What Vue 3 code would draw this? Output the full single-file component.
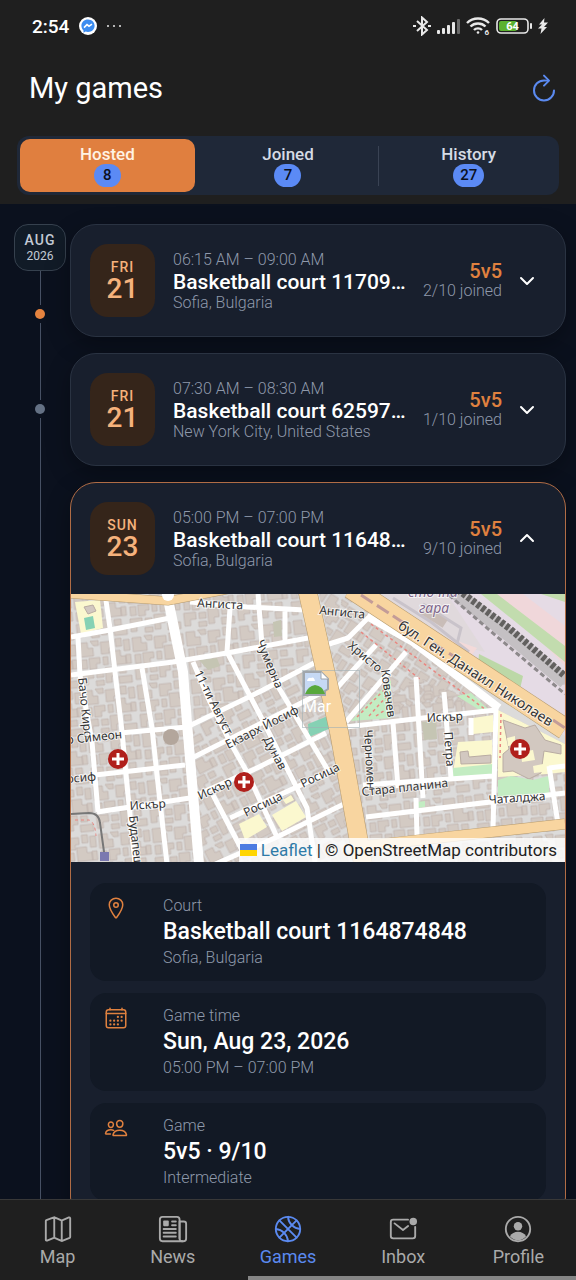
<template>
    <div class="app-shell">
        <header class="top">
            <div class="status-bar">
                <span class="clock">2:54</span>
                <svg class="messenger" viewBox="0 0 18 18">
                    <circle cx="9" cy="9" r="9" fill="#fff" />
                    <path d="M9 2.4c-3.8 0-6.6 2.7-6.6 6.3 0 1.9.8 3.5 2.1 4.7v2.3l2.1-1.1c.8.2 1.6.3 2.4.3 3.8 0 6.6-2.7 6.6-6.2S12.8 2.4 9 2.4z" fill="#3b8cf0" />
                    <path d="M5 10.600l3-3 2 1.600 3-2" fill="none" stroke="#fff" stroke-width="1.500" />
                </svg>
                <span class="dots"><i></i><i></i><i></i></span>
                <div class="status-icons">
                    <svg width="18" height="20" viewBox="0 0 18 20" fill="none" stroke="#e8e8e8" stroke-width="2">
                        <path d="M4 5l10 9-5 4.500V1.500L14 6 4 15" />
                        <path d="M0 10h3M15 10h3" />
                    </svg>
                    <svg width="23" height="16" viewBox="0 0 23 16" fill="#e8e8e8">
                        <rect x="0" y="12" width="3" height="4" rx="1" />
                        <rect x="5" y="10" width="3" height="6" rx="1" />
                        <rect x="10" y="7" width="3" height="9" rx="1" />
                        <rect x="15" y="4" width="3" height="12" rx="1" />
                        <rect x="20" y="1" width="3" height="15" rx="1" fill="#6a6a6a" />
                    </svg>
                    <svg width="24" height="18" viewBox="0 0 24 18" fill="none" stroke="#e8e8e8" stroke-width="2.400">
                        <path d="M1 6c6-6 16-6 22 0M4.500 9.500c4-4 11-4 15 0M8 13c2-2.200 6-2.200 8 0" />
                        <circle cx="12" cy="15.500" r="1.300" fill="#e8e8e8" stroke="none" />
                        <text x="18.500" y="17.500" class="wifi-six">6</text>
                    </svg>
                    <svg width="36" height="16" viewBox="0 0 36 16">
                        <rect x="1" y="1" width="31" height="14" rx="4" fill="none" stroke="#e8e8e8" stroke-width="1.600" />
                        <rect x="3" y="3" width="18" height="10" rx="2" fill="#5bb12f" />
                        <rect x="34" y="5" width="2" height="6" rx="1" fill="#e8e8e8" />
                        <text x="16.500" y="12" class="battery-level">64</text>
                    </svg>
                    <svg width="10" height="16" viewBox="0 0 10 16" fill="#e8e8e8">
                        <path d="M6.500 0L1 6.500h3L0 10.500h3.500L2.500 16 9 9H6l4-4.500H6z" />
                    </svg>
                </div>
            </div>

            <div class="title-bar">
                <h1>My games</h1>
                <button type="button" class="icon-btn" aria-label="Refresh" @click="refresh">
                    <svg width="32" height="32" viewBox="0 0 512 512" fill="none" stroke="#5b8af0" stroke-width="32" stroke-linecap="round" stroke-linejoin="round">
                        <path d="M320 146s24.360-12-64-12a160 160 0 10160 160" />
                        <path d="M256 58l80 80-80 80" />
                    </svg>
                </button>
            </div>

            <div class="segment">
                <button v-for="tab in tabs" :key="tab.id" type="button" class="segment-btn"
                    :class="{ active: tab.id === activeTab }" @click="activeTab = tab.id">
                    <span>{{ tab.label }}</span>
                    <span class="badge">{{ tab.count }}</span>
                </button>
            </div>
        </header>

        <main class="content">
            <aside class="timeline">
                <div class="month">
                    <strong>AUG</strong>
                    <span>2026</span>
                </div>
                <div class="line line-short"></div>
                <div class="dot dot-active"></div>
                <div class="line line-mid"></div>
                <div class="dot"></div>
                <div class="line line-rest"></div>
            </aside>

            <section class="games">
                <article v-for="game in games" :key="game.id" class="game-card" :class="{ open: game.id === openId }">
                    <button type="button" class="game-head" @click="toggle(game.id)">
                        <span class="date-box">
                            <span class="weekday">{{ game.weekday }}</span>
                            <span class="day">{{ game.day }}</span>
                        </span>
                        <span class="game-info">
                            <span class="muted">{{ game.time }}</span>
                            <span class="court-name">{{ game.court }}</span>
                            <span class="muted">{{ game.place }}</span>
                        </span>
                        <span class="game-side">
                            <span class="format">{{ game.format }}</span>
                            <span class="muted">{{ game.joined }} joined</span>
                        </span>
                        <svg class="chevron" viewBox="0 0 16 16" fill="none" stroke="#fff" stroke-width="2" stroke-linecap="round" stroke-linejoin="round">
                            <path :d="game.id === openId ? 'M2 10l6-6 6 6' : 'M2 5l6 6 6-6'" />
                        </svg>
                    </button>

                    <template v-if="game.id === openId">
                        <div class="map">
                            <svg class="map-tiles" viewBox="0 0 494 268" preserveAspectRatio="xMidYMid slice">
                                <defs>
                                    <pattern id="houses" width="54" height="48" patternUnits="userSpaceOnUse">
                                        <path :d="houses" fill="#d3cac3" stroke="#beb2aa" stroke-width="0.700" />
                                    </pattern>
                                    <pattern id="houses-west" href="#houses" patternTransform="rotate(-6)" />
                                    <pattern id="houses-mid" href="#houses" patternTransform="rotate(-27)" />
                                    <pattern id="houses-north" href="#houses" patternTransform="rotate(33)" />
                                </defs>
                                <rect width="494" height="268" fill="#dcdbda" />
                                <path d="M0 0H239L242 69 116 134 127 268H0z" fill="url(#houses-west)" />
                                <path d="M116 134L246 66 292 268H127z" fill="url(#houses-mid)" />
                                <path d="M248 0H285L427 114 345 112 275 130z" fill="url(#houses-north)" />
                                <path d="M270 130L345 84 427 116 494 150V268H290z" fill="url(#houses-west)" />

                                <path d="M4 8L29 6 32 34 10 40z" fill="#fbf8cf" />
                                <path d="M13 24l9-2 2 12-9 2zM237 130l20-8 3 12-22 9z" fill="#86d1b4" />
                                <path d="M13 13l9-2 3 6-8 3z" fill="#d2c8c0" stroke="#b9aca3" />
                                <path d="M128 66l18-2 3 8-12 4zM202 28l8-2 1 16-8 1zM351 128l14-1 1 18-13 1z" fill="#c5c5b3" />
                                <path d="M168 230l20-10 8 13-22 13zM201 221l24-14 10 16-24 14zM212 206l8-5 3 5-8 4z" fill="#fbf8cf" />
                                <path d="M387 148l34-2 1 30-40 2zM402 124l20-3v17l-20 2zM427 116l67 34v28l-18 2-49 3z" fill="#fbf8cf" />
                                <path d="M432 126l22 8 10-3 10 15 16 5v9l-17-3-3 22-12 6-16-8-10 1v-18l6-5z" fill="#d2c8c0" stroke="#b9aca3" />
                                <path d="M450 158l12-2 2 10-13 2zM436 144l8-2v9l-7 1zM462 172l10-2v8l-9 1z" fill="#fbf8cf" />
                                <path d="M389 158l8-1 1 6 22-2v8l-30 1z" fill="#d2c8c0" stroke="#b9aca3" />
                                <path d="M280 127L320 86v38zM427 186l13-4 22 4 16-4v17l-51 4zM382 174l40-4v10l-40 4zM386 102l14-3 18 17-8 1zM346 208l8-1v6l-8 1z" fill="#c3ecc2" />
                                <path d="M286 123l30-30M298 122l18-20M305 122l12-8M300 30l115 86M290 38l60 48M425 122l-1 45M430 120l-1 44" fill="none" stroke="#e98680" stroke-width="1.500" stroke-dasharray="3 3" />

                                <path d="M296 0H494V142L330 30z" fill="#e5dbe5" />
                                <path d="M300 0L372 48 414 58 376 0z" fill="#e0d9dc" />
                                <path d="M378 44l28 10-10 14-24-10z" fill="#f3dad9" />
                                <path d="M408 60l44 22-6 26-40-24z" fill="#bcd8a7" />
                                <path d="M424 0h28l42 32v40z" fill="#f0d7da" />
                                <path d="M410 0h16l68 52v16zM470 0h24v8z" fill="#c2dcae" />
                                <path d="M322 4l38 24 38 30M352 10l38 24-4 16M420 30l74 60" fill="none" stroke="#c9c3ca" stroke-width="3" />
                                <path d="M376 -8L432 36 494 88" fill="none" stroke="#c4c0c3" stroke-width="14" />
                                <path d="M382 -8L438 34 494 82" fill="none" stroke="#62605f" stroke-width="7" stroke-dasharray="4 2" />
                                <path d="M372 -4L430 46 494 100" fill="none" stroke="#8d898b" stroke-width="3" stroke-dasharray="5 3" />
                                <path d="M336 28l28 18M352 16l22 14M300 4l22 14" stroke="#c9bdb8" stroke-width="9" />

                                <g fill="none" stroke="#fff" stroke-width="5" stroke-linejoin="round">
                                    <path d="M34 0L39 34 44 78 51 138 56 191 64 270M7 43L9 81 21 148 27 218M71 74L81 134 86 181 96 270" />
                                    <path d="M0 43L39 36 99 24M0 81L102 68 156 59 237 44M49 139L116 133 192 96 243 69M24 181L114 171M121 164L252 98" />
                                    <path d="M26 218L119 204 186 174 255 139M159 224L256 179M140 272L206 243 275 209" />
                                    <path d="M119 8L176 13 234 16M159 14L156 58 189 121 236 214 244 268M187 0L191 51M214 16V48M202 84L258 178" />
                                    <path d="M122 68L139 108 159 148 176 178 206 243M142 201L172 258" />
                                    <path d="M255 51L277 44 298 23M264 96L305 51M275 128L335 58M345 83L352 204M373 98L380 184M322 129L327 194M400 124V141" />
                                    <path d="M275 133L352 124 425 116M425 114L422 236M292 191L422 182M295 223L494 199M345 204L346 243M478 172L487 230M478 174L494 172" />
                                </g>
                                <path d="M97 5L112 78 117 141 128 270" fill="none" stroke="#fff" stroke-width="10" />
                                <path d="M296 22L342 48 428 114" fill="none" stroke="#fff" stroke-width="8" />

                                <g fill="none" stroke="#b59a6e">
                                    <path d="M0 0L97 7 160 -5" stroke-width="9" />
                                    <path d="M295 252L494 230" stroke-width="11" />
                                    <path d="M280 -6L494 135" stroke-width="22" />
                                    <path d="M236 -5L268 138 292 270" stroke-width="19" />
                                </g>
                                <g fill="none" stroke="#f8d5a0">
                                    <path d="M0 0L97 7 160 -5" stroke-width="8" />
                                    <path d="M292 252L494 230" stroke-width="10" />
                                    <path d="M280 -6L494 135" stroke-width="21" />
                                    <path d="M236 -5L268 138 292 270" stroke-width="18" />
                                </g>
                                <path d="M290 1l46 30M362 49l22 14M482 126l12 8" stroke="#c39c98" stroke-width="3" stroke-dasharray="14 5" />
                                <circle cx="97" cy="1" r="6" fill="#fff" />
                                <circle cx="100" cy="143" r="8" fill="#b3a69c" />
                                <path d="M0 220l18-1q10 0 11 10l5 36" fill="none" stroke="#777" stroke-width="2" />
                                <path d="M4 226h14q6 2 7 16" fill="none" stroke="#e98680" stroke-dasharray="3 3" />
                                <rect x="29" y="258" width="9" height="9" fill="#7b79b0" />

                                <text v-for="label in streets" :key="label.id" class="street" :class="label.kind"
                                    :transform="`translate(${label.x} ${label.y}) rotate(${label.angle})`">{{ label.name }}</text>

                                <g v-for="spot in hospitals" :key="spot.x" :transform="`translate(${spot.x} ${spot.y})`">
                                    <circle r="10" fill="#b01f1b" />
                                    <path d="M-6 0H6M0-6V6" stroke="#fff" stroke-width="3" />
                                </g>
                            </svg>
                            <div class="marker">
                                <svg width="26" height="28" viewBox="0 0 26 28">
                                    <path d="M1 1h17l7 7v10l-3 2v4H1z" fill="#c6d9f4" stroke="#a0a6ac" stroke-width="2" />
                                    <path d="M18 1v7h7" fill="#fff" stroke="#a0a6ac" />
                                    <path d="M4 10q1-4 4-3 3-2 4 3z" fill="#fff" />
                                    <path d="M2 23q3-8 10-9 8 1 10 9z" fill="#58a83c" />
                                </svg>
                                <span>Mar</span>
                            </div>
                            <div class="attribution">
                                <svg class="flag" width="17" height="12" viewBox="0 0 17 12">
                                    <path d="M0 0h17v6H0z" fill="#4c7be1" />
                                    <path d="M0 6h17v6H0z" fill="#ffd500" />
                                </svg>
                                <a href="#leaflet">Leaflet</a> | © OpenStreetMap contributors
                            </div>
                        </div>

                        <div class="details">
                            <div v-for="row in details" :key="row.label" class="detail">
                                <svg class="detail-icon" viewBox="0 0 512 512" fill="none" stroke="#e0813f" stroke-width="32" stroke-linecap="round" stroke-linejoin="round">
                                    <template v-if="row.icon === 'pin'">
                                        <path d="M256 48c-79.500 0-144 61.400-144 137 0 87 96 224.870 131.250 272.490a15.770 15.770 0 0025.500 0C304 409.890 400 272.070 400 185c0-75.600-64.500-137-144-137z" />
                                        <circle cx="256" cy="192" r="48" />
                                    </template>
                                    <template v-else-if="row.icon === 'calendar'">
                                        <rect x="48" y="80" width="416" height="384" rx="48" />
                                        <path d="M128 48v32M384 48v32M464 160H48" />
                                        <g fill="#e0813f" stroke="none">
                                            <circle v-for="(dot, i) in calendarDots" :key="i" :cx="dot[0]" :cy="dot[1]" r="24" />
                                        </g>
                                    </template>
                                    <template v-else>
                                        <path d="M402 168c-3 40-33 72-66 72s-63-32-66-72c-3-42 26-72 66-72s69 31 66 72z" />
                                        <path d="M336 304c-65 0-128 32-144 95-2 8 3 17 12 17h264c9 0 14-9 12-17-16-64-78-95-144-95z" />
                                        <path d="M200 186c-3 32-27 58-53 58s-50-26-53-58c-2-34 22-58 53-58s55 25 53 58zM206 306c-18-8-38-11-59-11-52 0-102 25-115 76-2 7 3 13 10 13h95" />
                                    </template>
                                </svg>
                                <div class="detail-text">
                                    <span class="muted">{{ row.label }}</span>
                                    <strong>{{ row.value }}</strong>
                                    <span class="muted">{{ row.note }}</span>
                                </div>
                            </div>
                        </div>
                    </template>
                </article>
            </section>
        </main>

        <footer class="bottom">
            <nav class="tab-bar">
                <a v-for="item in navItems" :key="item.id" :href="'#' + item.id" class="tab" :class="{ current: item.id === 'games' }">
                    <svg width="30" height="30" viewBox="0 0 512 512" fill="none" stroke="currentColor" stroke-width="32" stroke-linecap="round" stroke-linejoin="round">
                        <path v-if="item.id === 'map'" d="M313 108l-114-52a16 16 0 00-14 0L57 104a16 16 0 00-9 15v320a16 16 0 0022 15l115-46a16 16 0 0113 0l117 51a16 16 0 0013 0l127-52a16 16 0 009-14V72a16 16 0 00-22-14l-116 50a16 16 0 01-13 0zM192 60v344M320 112v344" />
                        <template v-else-if="item.id === 'news'">
                            <path d="M368 415V92a44 44 0 00-44-44H76a44 44 0 00-44 44v328a44 44 0 0044 44h340" />
                            <path d="M416 464a48 48 0 01-48-48V128h72a40 40 0 0140 40v248a48 48 0 01-48 48z" />
                            <path d="M240 128h64M240 192h64M96 256h208M96 320h208M96 384h208" />
                            <rect x="88" y="112" width="96" height="96" rx="14" fill="currentColor" stroke="none" />
                        </template>
                        <template v-else-if="item.id === 'games'">
                            <circle cx="256" cy="256" r="208" />
                            <path d="M109 109l294 294M403 109L109 403" />
                            <path d="M48 256c110 8 200 98 208 208M256 48c8 110 98 200 208 208" />
                        </template>
                        <template v-else-if="item.id === 'inbox'">
                            <path d="M342 96H88a40 40 0 00-40 40v240a40 40 0 0040 40h336a40 40 0 0040-40V219M112 160l144 112 87-66" />
                            <circle cx="431" cy="128" r="64" fill="currentColor" stroke="none" />
                        </template>
                        <template v-else>
                            <circle cx="256" cy="256" r="208" />
                            <circle cx="256" cy="208" r="72" fill="currentColor" stroke="none" />
                            <path d="M256 304c58 0 108 28 138 76-36 44-84 68-138 68s-102-24-138-68c30-48 80-76 138-76z" fill="currentColor" stroke="none" />
                        </template>
                    </svg>
                    <span>{{ item.label }}</span>
                </a>
            </nav>
            <div class="home-indicator"></div>
        </footer>
    </div>
</template>

<script setup>
import { ref } from 'vue'

const activeTab = ref('hosted')
const openId = ref(3)

const tabs = [
    { id: 'hosted', label: 'Hosted', count: 8 },
    { id: 'joined', label: 'Joined', count: 7 },
    { id: 'history', label: 'History', count: 27 },
]

const games = ref([
    { id: 1, weekday: 'FRI', day: 21, time: '06:15 AM – 09:00 AM', court: 'Basketball court 11709…', place: 'Sofia, Bulgaria', format: '5v5', joined: '2/10' },
    { id: 2, weekday: 'FRI', day: 21, time: '07:30 AM – 08:30 AM', court: 'Basketball court 62597…', place: 'New York City, United States', format: '5v5', joined: '1/10' },
    { id: 3, weekday: 'SUN', day: 23, time: '05:00 PM – 07:00 PM', court: 'Basketball court 11648…', place: 'Sofia, Bulgaria', format: '5v5', joined: '9/10' },
])

const details = [
    { icon: 'pin', label: 'Court', value: 'Basketball court 1164874848', note: 'Sofia, Bulgaria' },
    { icon: 'calendar', label: 'Game time', value: 'Sun, Aug 23, 2026', note: '05:00 PM – 07:00 PM' },
    { icon: 'people', label: 'Game', value: '5v5 · 9/10', note: 'Intermediate' },
]

const navItems = [
    { id: 'map', label: 'Map' },
    { id: 'news', label: 'News' },
    { id: 'games', label: 'Games' },
    { id: 'inbox', label: 'Inbox' },
    { id: 'profile', label: 'Profile' },
]

const calendarDots = [
    [296, 232], [376, 232],
    [136, 312], [216, 312], [296, 312], [376, 312],
    [136, 392], [216, 392], [296, 392],
]

// One tile of building footprints, repeated over the blocks
const houses = 'M2 2h9v6h5v8H2zM14 1h8v5h-5zM24 3h12v7h-4v5h-8zM39 1h6v8h-6zM47 3h6v11h-6zM3 19h6v9H3zM11 18h11v6h-4v5h-7zM25 18h5v8h-5zM33 13h10v6h5v8H33zM2 31h12v7H8v6H2zM17 32h7v6h-7zM26 29h11v9h-5v6h-6zM40 30h7v6h-7zM48 18h5v9h-5zM16 41h8v5h-8zM39 39h13v7H39z'

const streets = [
    { id: 1, name: 'Ангиста', x: 126, y: 13, angle: 3 },
    { id: 2, name: 'Ангиста', x: 248, y: 20, angle: 6 },
    { id: 3, name: 'Бачо Киро', x: 7, y: 84, angle: 84 },
    { id: 4, name: 'о Симеон', x: -4, y: 150, angle: -6 },
    { id: 5, name: 'осиф', x: -4, y: 189, angle: -5 },
    { id: 6, name: 'Искър', x: 59, y: 216, angle: -4 },
    { id: 7, name: 'Будапеща', x: 58, y: 222, angle: 84 },
    { id: 8, name: '11-ти Август', x: 123, y: 79, angle: 63 },
    { id: 9, name: 'Чумерна', x: 185, y: 48, angle: 67 },
    { id: 10, name: 'Екзарх Йосиф', x: 157, y: 155, angle: -27 },
    { id: 11, name: 'Дунав', x: 192, y: 145, angle: 62 },
    { id: 12, name: 'Искър', x: 129, y: 206, angle: -25 },
    { id: 13, name: 'Росица', x: 175, y: 223, angle: -26 },
    { id: 14, name: 'Росица', x: 232, y: 194, angle: -26 },
    { id: 15, name: 'Христо', x: 276, y: 53, angle: 40 },
    { id: 16, name: 'Ковачев', x: 310, y: 76, angle: 82 },
    { id: 17, name: 'Искър', x: 356, y: 128, angle: -3 },
    { id: 18, name: 'Черномен', x: 293, y: 136, angle: 87 },
    { id: 19, name: 'Петра', x: 373, y: 138, angle: 86 },
    { id: 20, name: 'Стара планина', x: 291, y: 202, angle: -6 },
    { id: 21, name: 'Чаталджа', x: 418, y: 210, angle: -4 },
    { id: 22, name: 'бул. Ген. Данаил Николаев', x: 326, y: 34, angle: 33, kind: 'boulevard' },
    { id: 23, name: 'сточна', x: 337, y: 3, angle: 0, kind: 'station' },
    { id: 24, name: 'гара', x: 348, y: 19, angle: 0, kind: 'station' },
]

const hospitals = [
    { x: 47, y: 165 },
    { x: 173, y: 188 },
    { x: 449, y: 155 },
]

const toggle = (id) => {
    openId.value = openId.value === id ? null : id
}

const refresh = () => {
    // TODO: reload games from the API
    games.value = [...games.value]
}
</script>

<style>
body {
    background-color: #0b111e;
}
</style>

<style scoped>
.app-shell {
    display: flex;
    flex-direction: column;
    height: 100vh;
    overflow: hidden;
    background-color: #0b111e;
    color: #fff;
    font-family: Roboto, "Liberation Sans", sans-serif;
    font-size: 16px;
}

button {
    font: inherit;
    color: inherit;
    background: none;
    border: none;
    padding: 0;
    cursor: pointer;
}

.top {
    flex: none;
    background-color: #1f1f1f;
    padding-bottom: 9px;
}

.status-bar {
    display: flex;
    align-items: center;
    gap: 10px;
    height: 52px;
    padding: 0 28px 0 32px;
}

.clock {
    font-size: 19px;
    font-weight: 500;
}

.messenger {
    width: 18px;
    height: 18px;
}

.dots {
    display: flex;
    gap: 4px;
}

.dots i {
    width: 2px;
    height: 2px;
    border-radius: 1px;
    background-color: #e8e8e8;
}

.status-icons {
    display: flex;
    align-items: center;
    gap: 6px;
    margin-left: auto;
}

.wifi-six {
    font-size: 8px;
    font-weight: 700;
    fill: #e8e8e8;
    stroke: #1f1f1f;
    stroke-width: 1px;
    paint-order: stroke;
}

.battery-level {
    font-size: 11px;
    font-weight: 700;
    fill: #fff;
    text-anchor: middle;
}

.title-bar {
    display: flex;
    align-items: center;
    justify-content: space-between;
    height: 72px;
    padding: 0 16px 0 29px;
}

h1 {
    margin: 0;
    font-size: 29px;
    font-weight: 400;
}

.icon-btn {
    display: flex;
}

.segment {
    display: grid;
    grid-template-columns: repeat(3, 1fr);
    margin: 12px 17px 0;
    border-radius: 12px;
    background-color: #1f2838;
}

.segment-btn {
    position: relative;
    display: flex;
    flex-direction: column;
    align-items: center;
    height: 53px;
    margin: 3px;
    padding-top: 5px;
    border-radius: 10px;
    color: #d5dbe5;
    font-size: 17px;
    font-weight: 500;
    line-height: 20px;
}

.segment-btn.active {
    background-color: #e07f3f;
    color: #fff3e4;
}

.segment-btn:nth-child(2)::after {
    content: "";
    position: absolute;
    top: 7px;
    right: -4px;
    width: 1px;
    height: 40px;
    background-color: #3a4354;
}

.badge {
    min-width: 27px;
    padding: 0 7px;
    box-sizing: border-box;
    border-radius: 12px;
    background-color: #5b8af5;
    color: #0b1020;
    font-size: 15px;
    line-height: 23px;
    text-align: center;
}

.content {
    display: flex;
    flex: 1;
    min-height: 0;
    overflow: hidden;
    padding: 20px 10px 0 14px;
}

.timeline {
    display: flex;
    flex-direction: column;
    align-items: center;
    flex: none;
    width: 52px;
}

.month {
    display: flex;
    flex-direction: column;
    align-items: center;
    align-self: stretch;
    height: 47px;
    box-sizing: border-box;
    padding-top: 7px;
    border: 1px solid #36414e;
    border-radius: 14px;
    background-color: #111b27;
    color: #c3cad5;
    font-size: 12px;
    line-height: 16px;
}

.month strong {
    font-size: 14px;
    font-weight: 500;
    letter-spacing: 1px;
}

.line {
    width: 1px;
    background-color: #465063;
}

.line-short {
    height: 34px;
}

.line-mid {
    height: 77px;
    margin-top: 4px;
}

.line-rest {
    flex: 1;
    margin-top: 4px;
}

.dot {
    width: 10px;
    height: 10px;
    margin-top: 4px;
    border-radius: 50%;
    background-color: #647184;
}

.dot-active {
    background-color: #e5833f;
}

.games {
    flex: 1;
    min-width: 0;
    display: flex;
    flex-direction: column;
    gap: 16px;
    margin-left: 4px;
}

.game-card {
    flex: none;
    border: 1px solid #2a3342;
    border-radius: 26px;
    background-color: #181f2d;
    overflow: hidden;
    box-shadow: 0 8px 24px rgba(0, 0, 0, 0.3);
}

.game-card.open {
    border-color: #b06c45;
}

.game-head {
    display: flex;
    align-items: center;
    width: 100%;
    height: 111px;
    padding: 0 30px 0 19px;
    text-align: left;
}

.date-box {
    display: flex;
    flex-direction: column;
    align-items: center;
    justify-content: center;
    flex: none;
    width: 65px;
    height: 73px;
    border-radius: 18px;
    background-color: #35251a;
    color: #f5b27c;
}

.weekday {
    font-size: 14px;
    font-weight: 500;
    line-height: 16px;
    letter-spacing: 1px;
}

.day {
    font-size: 28px;
    font-weight: 500;
    line-height: 28px;
}

.game-info {
    display: flex;
    flex-direction: column;
    flex: 1;
    min-width: 0;
    margin-left: 18px;
}

.muted {
    color: #8f99ab;
    font-size: 16px;
    font-weight: 300;
    line-height: 20px;
}

.court-name {
    overflow: hidden;
    font-size: 21px;
    font-weight: 500;
    line-height: 24px;
    white-space: nowrap;
    text-overflow: ellipsis;
}

.game-info .muted:last-child {
    line-height: 18px;
}

.game-side {
    display: flex;
    flex-direction: column;
    align-items: flex-end;
    flex: none;
    margin-left: 14px;
}

.format {
    color: #e0813f;
    font-size: 20px;
    font-weight: 500;
    line-height: 20px;
}

.chevron {
    flex: none;
    width: 16px;
    height: 16px;
    margin-left: 17px;
}

.map {
    position: relative;
    height: 268px;
    overflow: hidden;
}

.map-tiles {
    display: block;
    width: 100%;
    height: 100%;
}

.street {
    fill: #333;
    stroke: rgba(255, 255, 255, 0.7);
    stroke-width: 2px;
    paint-order: stroke;
    font-family: "Noto Sans", sans-serif;
    font-size: 12px;
}

.street.boulevard {
    font-size: 14px;
}

.street.station {
    fill: #81698c;
    font-size: 14px;
    font-style: italic;
}

.marker {
    position: absolute;
    top: 76px;
    left: calc(50% - 16px);
    width: 56px;
    height: 56px;
    border: 1px solid rgba(160, 175, 180, 0.6);
    line-height: 16px;
    overflow: hidden;
}

.marker svg,
.marker span {
    display: block;
}

.attribution {
    position: absolute;
    right: 0;
    bottom: 0;
    padding: 0 8px 0 1px;
    background-color: rgba(255, 255, 255, 0.8);
    color: #222;
    font-size: 17px;
    line-height: 24px;
}

.attribution a {
    color: #2f7ba8;
    text-decoration: none;
}

.flag {
    margin-right: 4px;
}

.details {
    display: flex;
    flex-direction: column;
    gap: 12px;
    padding: 21px 19px;
}

.detail {
    display: flex;
    padding: 13px 14px;
    border-radius: 16px;
    background-color: #121925;
}

.detail-icon {
    flex: none;
    width: 24px;
    height: 24px;
}

.detail-text {
    display: flex;
    flex-direction: column;
    margin-left: 35px;
}

.detail-text strong {
    font-size: 23px;
    font-weight: 500;
    line-height: 32px;
}

.bottom {
    flex: none;
    background-color: #1f1f1f;
}

.tab-bar {
    display: grid;
    grid-template-columns: repeat(5, 1fr);
    height: 76px;
    border-top: 1px solid #383838;
}

.tab {
    display: flex;
    flex-direction: column;
    align-items: center;
    padding-top: 14px;
    color: #aaa;
    font-size: 18px;
    line-height: 26px;
    text-decoration: none;
}

.tab.current {
    color: #5b8af0;
}

.home-indicator {
    width: 57%;
    height: 4px;
    margin-left: auto;
    background-color: #858585;
}
</style>
